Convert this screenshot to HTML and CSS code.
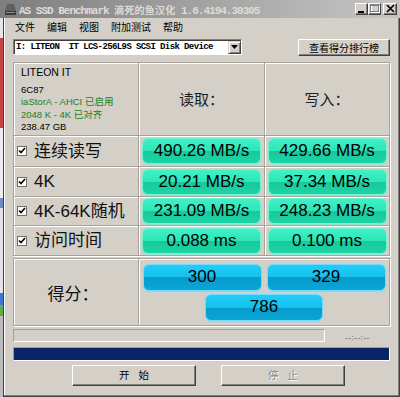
FILE: index.html
```html
<!DOCTYPE html>
<html lang="zh-CN">
<head>
    <meta charset="UTF-8">
    <title>AS SSD Benchmark</title>
    <link rel="stylesheet" href="styles.css">
</head>
<body>
    <div class="titlebar">
        <svg class="app-icon" width="11" height="12" viewBox="0 0 11 12">
            <path d="M2 1h7l2 7H0z" fill="#5e5e5e"/>
            <rect x="0" y="8" width="11" height="4" fill="#3a3a3a"/>
            <rect x="1" y="9" width="9" height="1" fill="#8c8c8c"/>
        </svg>
        <span class="title">AS SSD Benchmark <span class="title-cn">滴死的鱼汉化</span> 1.6.4194.30305</span>
        <div class="caption-btns">
            <span class="cap-btn">
                <svg width="11" height="10" viewBox="0 0 11 10"><rect x="2" y="7" width="6" height="2" fill="#000"/></svg>
            </span>
            <span class="cap-btn">
                <svg width="11" height="10" viewBox="0 0 11 10">
                    <rect x="2.5" y="1.5" width="8" height="7" fill="none" stroke="#fff"/>
                    <rect x="1.5" y="0.5" width="8" height="7" fill="none" stroke="#808080"/>
                    <rect x="1" y="1" width="9" height="1" fill="#808080"/>
                </svg>
            </span>
            <span class="cap-btn close">
                <svg width="11" height="10" viewBox="0 0 11 10"><path d="M2 1l7 7M9 1l-7 7" stroke="#000" stroke-width="1.6"/></svg>
            </span>
        </div>
    </div>

    <div class="frame">
        <div class="desktop-strip"></div>
        <div class="window">
            <div class="menubar">
                <span>文件</span>
                <span>编辑</span>
                <span>视图</span>
                <span>附加测试</span>
                <span>帮助</span>
            </div>

            <div class="toolbar">
                <div class="combo">
                    <span class="combo-text">I: LITEON  IT LCS-256L9S SCSI Disk Device</span>
                    <span class="combo-arrow">
                        <svg width="7" height="4" viewBox="0 0 7 4"><path d="M0 0h7L3.5 4z" fill="#000"/></svg>
                    </span>
                </div>
                <button class="btn btn-rank">查看得分排行榜</button>
            </div>

            <div class="results">
                <div class="cell info">
                    <div class="drive-name">LITEON IT</div>
                    <div class="drive-line">6C87</div>
                    <div class="drive-line ok">iaStorA - AHCI 已启用</div>
                    <div class="drive-line ok">2048 K - 4K 已对齐</div>
                    <div class="drive-line">238.47 GB</div>
                </div>
                <div class="cell head">读取：</div>
                <div class="cell head">写入：</div>

                <div class="cell label">
                    <svg class="check" width="10" height="10" viewBox="0 0 10 10"><rect x="0.5" y="0.5" width="9" height="9" fill="#fff" stroke="#6e6e6e"/><path d="M2 4.5l2 2 4-4.5" fill="none" stroke="#000" stroke-width="1.6"/></svg>
                    <span>连续读写</span>
                </div>
                <div class="cell"><div class="pill">490.26 MB/s</div></div>
                <div class="cell"><div class="pill">429.66 MB/s</div></div>

                <div class="cell label">
                    <svg class="check" width="10" height="10" viewBox="0 0 10 10"><rect x="0.5" y="0.5" width="9" height="9" fill="#fff" stroke="#6e6e6e"/><path d="M2 4.5l2 2 4-4.5" fill="none" stroke="#000" stroke-width="1.6"/></svg>
                    <span>4K</span>
                </div>
                <div class="cell"><div class="pill">20.21 MB/s</div></div>
                <div class="cell"><div class="pill">37.34 MB/s</div></div>

                <div class="cell label">
                    <svg class="check" width="10" height="10" viewBox="0 0 10 10"><rect x="0.5" y="0.5" width="9" height="9" fill="#fff" stroke="#6e6e6e"/><path d="M2 4.5l2 2 4-4.5" fill="none" stroke="#000" stroke-width="1.6"/></svg>
                    <span>4K-64K随机</span>
                </div>
                <div class="cell"><div class="pill">231.09 MB/s</div></div>
                <div class="cell"><div class="pill">248.23 MB/s</div></div>

                <div class="cell label">
                    <svg class="check" width="10" height="10" viewBox="0 0 10 10"><rect x="0.5" y="0.5" width="9" height="9" fill="#fff" stroke="#6e6e6e"/><path d="M2 4.5l2 2 4-4.5" fill="none" stroke="#000" stroke-width="1.6"/></svg>
                    <span>访问时间</span>
                </div>
                <div class="cell"><div class="pill">0.088 ms</div></div>
                <div class="cell"><div class="pill">0.100 ms</div></div>
            </div>

            <div class="score">
                <div class="cell score-label">得分：</div>
                <div class="cell score-values">
                    <div class="pill blue">300</div>
                    <div class="pill blue">329</div>
                    <div class="pill blue total">786</div>
                </div>
            </div>

            <div class="progress-row">
                <div class="status-field"></div>
                <span class="elapsed">--:--:--</span>
            </div>

            <div class="progress-bar"></div>

            <div class="actions">
                <button class="btn btn-action">开始</button>
                <button class="btn btn-action" disabled>停止</button>
            </div>
        </div>
    </div>
</body>
</html>
```

FILE: styles.css
```css
* {
    box-sizing: border-box;
}
body {
    margin: 0;
    width: 400px;
    height: 397px;
    overflow: hidden;
    display: flex;
    flex-direction: column;
    background: #d4d0c8;
    font-family: "Liberation Sans", "Noto Sans CJK SC", sans-serif;
    color: #000;
}

/* title bar (inactive window) */
.titlebar {
    height: 18px;
    flex: none;
    display: flex;
    align-items: center;
    padding-left: 5px;
    background: linear-gradient(90deg, #7e7e7e, #c6c6c6);
}
.app-icon {
    margin-right: 3px;
}
.title {
    font-family: "Liberation Mono", monospace;
    font-weight: bold;
    font-size: 11px;
    letter-spacing: -1px;
    color: #dedbd4;
    white-space: pre;
}
.title-cn {
    font-family: "Noto Sans CJK SC", sans-serif;
    font-size: 10px;
    letter-spacing: 0.2px;
}
.caption-btns {
    margin-left: auto;
    margin-right: 3px;
    display: flex;
}
.cap-btn {
    width: 13px;
    height: 12px;
    display: flex;
    align-items: center;
    justify-content: center;
    background: #d4d0c8;
    border: 1px solid;
    border-color: #fff #404040 #404040 #fff;
    box-shadow: inset -1px -1px #808080;
}
.cap-btn.close {
    width: 14px;
    margin-left: 2px;
}

.frame {
    flex: 1;
    display: flex;
}
.desktop-strip {
    width: 3px;
    background: linear-gradient(#e6e6e6 0, #e6e6e6 20px, #c84444 20px, #c84444 110px, #ececec 110px,
        #ececec 180px, #6c8cc8 180px, #6c8cc8 190px, #e4e4e4 190px, #e4e4e4 275px, #3c78d8 275px,
        #3c78d8 287px, #5fae4c 287px, #5fae4c 298px, #bcbcbc 298px);
}
.window {
    flex: 1;
    padding: 0 9px 0 9px;
    border-left: 1px solid #404040;
    border-right: 1px solid #404040;
    border-bottom: 1px solid #404040;
    box-shadow: inset -1px -1px #808080, inset 1px 0 #fff;
}

/* menu */
.menubar {
    height: 17px;
    display: flex;
    align-items: center;
    gap: 12px;
    padding-left: 2px;
    font-family: "Noto Sans CJK SC", sans-serif;
    font-size: 10px;
}

.toolbar {
    margin-top: 4px;
    height: 17px;
    display: flex;
    justify-content: space-between;
}
.combo {
    width: 229px;
    height: 16px;
    display: flex;
    align-items: center;
    background: #fff;
    border: 1px solid;
    border-color: #808080 #fff #fff #808080;
    box-shadow: inset 1px 1px #404040;
    padding-left: 2px;
}
.combo-text {
    flex: 1;
    font-family: "Liberation Mono", monospace;
    font-weight: bold;
    font-size: 9px;
    letter-spacing: -0.6px;
    white-space: pre;
}
.combo-arrow {
    width: 13px;
    height: 13px;
    display: flex;
    align-items: center;
    justify-content: center;
    background: #d4d0c8;
    border: 1px solid;
    border-color: #d4d0c8 #404040 #404040 #d4d0c8;
    box-shadow: inset 1px 1px #fff, inset -1px -1px #808080;
}

.btn {
    background: #d4d0c8;
    border: 1px solid;
    border-color: #fff #404040 #404040 #fff;
    box-shadow: inset -1px -1px #808080;
    font-family: "Noto Sans CJK SC", sans-serif;
    font-size: 10px;
    color: #000;
    padding: 0;
    line-height: 1;
}
.btn-rank {
    width: 92px;
    height: 17px;
}

/* results grid */
.results {
    margin-top: 6px;
    display: grid;
    grid-template-columns: 125px 126px 125px;
    grid-template-rows: 73px 31px 30px 29px 30px;
    border-right: 1px solid #a7a39b;
    border-bottom: 1px solid #a7a39b;
    box-shadow: 1px 1px 0 #fff;
}
.cell {
    border-left: 1px solid #a7a39b;
    border-top: 1px solid #a7a39b;
    box-shadow: inset 1px 1px 0 #fff;
    display: flex;
    align-items: center;
    justify-content: center;
}
.info {
    flex-direction: column;
    align-items: flex-start;
    justify-content: flex-start;
    padding: 3px 7px;
}
.drive-name {
    font-size: 10.5px;
    line-height: 13px;
    margin-bottom: 5px;
}
.drive-line {
    font-size: 9.5px;
    line-height: 12.3px;
}
.drive-line.ok {
    color: #1b7f1b;
}
.head {
    font-family: "Noto Sans CJK SC", sans-serif;
    font-size: 15px;
    color: #1e1e1e;
    padding-bottom: 2px;
}
.label {
    justify-content: flex-start;
    padding-left: 3px;
    gap: 7px;
    font-size: 17px;
    line-height: 1;
    color: #111;
}
.check {
    flex: none;
}

.pill {
    width: 119px;
    height: 26px;
    display: flex;
    align-items: center;
    justify-content: center;
    font-size: 17px;
    color: #000;
    border-radius: 6px;
    border: 1px solid #74f2d2;
    background: linear-gradient(#3ef1c6 0%, #2ce5b7 52%, #17c99b 52%, #1dd4a6 100%);
    box-shadow: 0 1px 1px #8ee8d2;
}
.pill.blue {
    width: 119px;
    height: 27px;
    border-color: #6fdcff;
    background: linear-gradient(#22cdf8 0%, #16c0ee 50%, #059ccb 50%, #0aa6d6 100%);
    box-shadow: 0 1px 1px #8ad8f2;
}

/* score */
.score {
    margin-top: 2px;
    height: 68px;
    display: grid;
    grid-template-columns: 125px 251px;
    border-right: 1px solid #a7a39b;
    border-bottom: 1px solid #a7a39b;
    box-shadow: 1px 1px 0 #fff;
}
.score-label {
    font-family: "Noto Sans CJK SC", sans-serif;
    font-size: 17px;
    color: #111;
    padding-right: 6px;
}
.score-values {
    display: grid;
    grid-template-columns: 119px 119px;
    justify-content: center;
    align-content: center;
    gap: 3px 5px;
}
.pill.total {
    grid-column: 1 / 3;
    justify-self: center;
    width: 118px;
}

.progress-row {
    margin-top: 3px;
    display: flex;
    align-items: center;
}
.status-field {
    width: 312px;
    height: 13px;
    border: 1px solid;
    border-color: #a0a0a0 #fff #fff #a0a0a0;
}
.elapsed {
    flex: 1;
    text-align: center;
    font-size: 8px;
    letter-spacing: 0.5px;
    color: #505050;
    padding-top: 3px;
}

.progress-bar {
    margin-top: 5px;
    height: 14px;
    background: #0a2468;
    border: 1px solid;
    border-color: #9a9a9a #fff #fff #9a9a9a;
}

.actions {
    margin-top: 4px;
    padding-left: 59px;
    display: flex;
    gap: 25px;
}
.btn-action {
    width: 124px;
    height: 21px;
    letter-spacing: 9px;
    padding-left: 9px;
    font-size: 10.5px;
}
.btn-action:disabled {
    color: #8a8a8a;
    text-shadow: 1px 1px 0 #fff;
}
```
